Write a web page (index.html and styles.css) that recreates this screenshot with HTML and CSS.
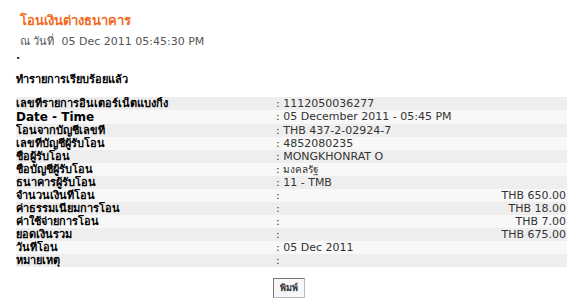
FILE: index.html
```html
<!DOCTYPE html>
<html>
<head>
<meta charset="utf-8">
<link rel="stylesheet" href="styles.css">
</head>
<body>
<div class="page">
  <div class="title">โอนเงินต่างธนาคาร</div>
  <div class="subtitle">ณ วันที่&nbsp; 05 Dec 2011 05:45:30 PM</div>
  <div class="dot">.</div>
  <div class="status">ทำรายการเรียบร้อยแล้ว</div>
  <table class="detail">
    <tr class="odd"><td class="lbl">เลขที่รายการอินเตอร์เน็ตแบงกิ้ง</td><td class="val">: 1112050036277</td></tr>
    <tr class="even tall"><td class="lbl big">Date - Time</td><td class="val">: 05 December 2011 - 05:45 PM</td></tr>
    <tr class="odd"><td class="lbl">โอนจากบัญชีเลขที่</td><td class="val">: THB 437-2-02924-7</td></tr>
    <tr class="even"><td class="lbl">เลขที่บัญชีผู้รับโอน</td><td class="val">: 4852080235</td></tr>
    <tr class="odd"><td class="lbl">ชื่อผู้รับโอน</td><td class="val">: MONGKHONRAT O</td></tr>
    <tr class="even"><td class="lbl">ชื่อบัญชีผู้รับโอน</td><td class="val">: <span class="thai">มงคลรัฐ</span></td></tr>
    <tr class="odd"><td class="lbl">ธนาคารผู้รับโอน</td><td class="val">: 11 - TMB</td></tr>
    <tr class="even"><td class="lbl">จำนวนเงินที่โอน</td><td class="val"><div class="amt"><span>:</span><span>THB 650.00</span></div></td></tr>
    <tr class="odd"><td class="lbl">ค่าธรรมเนียมการโอน</td><td class="val"><div class="amt"><span>:</span><span>THB 18.00</span></div></td></tr>
    <tr class="even"><td class="lbl">ค่าใช้จ่ายการโอน</td><td class="val"><div class="amt"><span>:</span><span>THB 7.00</span></div></td></tr>
    <tr class="odd"><td class="lbl">ยอดเงินรวม</td><td class="val"><div class="amt"><span>:</span><span>THB 675.00</span></div></td></tr>
    <tr class="even"><td class="lbl">วันที่โอน</td><td class="val">: 05 Dec 2011</td></tr>
    <tr class="odd"><td class="lbl">หมายเหตุ</td><td class="val">:</td></tr>
  </table>
  <div class="actions"><button class="print">พิมพ์</button></div>
</div>
</body>
</html>
```
FILE: styles.css
```css
html, body {
  margin: 0;
  padding: 0;
  background: #ffffff;
}
.page {
  padding: 12px 15px 0 16px;
  font-family: "DejaVu Sans", "Noto Sans", sans-serif;
  font-size: 11px;
  color: #222;
}
.title {
  color: #f26b1d;
  font-size: 13px;
  font-weight: bold;
  padding-left: 4px;
  line-height: 18px;
}
.subtitle {
  color: #555;
  font-size: 11px;
  padding-left: 4px;
  margin-top: 5px;
  line-height: 14px;
}
.dot {
  color: #224;
  line-height: 12px;
  margin-top: 1px;
  font-weight: bold;
}
.status {
  font-weight: bold;
  margin-top: 11px;
  line-height: 14px;
  color: #000;
}
.detail {
  margin-top: 10px;
  width: 551px;
  border-collapse: separate;
  border-spacing: 0;
}
.detail td {
  padding: 0;
  height: 13px;
  line-height: 13px;
  vertical-align: middle;
  overflow: hidden;
}
.detail tr.tall td {
  height: 14px;
  line-height: 14px;
}
.odd { background: #efeeee; }
.even { background: #f8f8f8; }
.lbl {
  width: 260px;
  font-weight: bold;
  color: #000;
  font-size: 11px;
}
.lbl.big {
  font-size: 12px;
}
.val {
  color: #333;
  font-size: 11px;
}
.thai {
  font-size: 10px;
}
.amt {
  display: flex;
  justify-content: space-between;
  padding-right: 1px;
}
.actions {
  display: flex;
  justify-content: center;
  margin-top: 11px;
  padding-right: 5px;
}
.print {
  font-family: "DejaVu Sans", sans-serif;
  font-size: 9px;
  font-weight: bold;
  color: #333;
  background: #f7f7f7;
  border: 1px solid #777;
  border-right-color: #bbb;
  border-bottom-color: #bbb;
  padding: 0 4px;
  width: 32px;
  height: 20px;
}
```
